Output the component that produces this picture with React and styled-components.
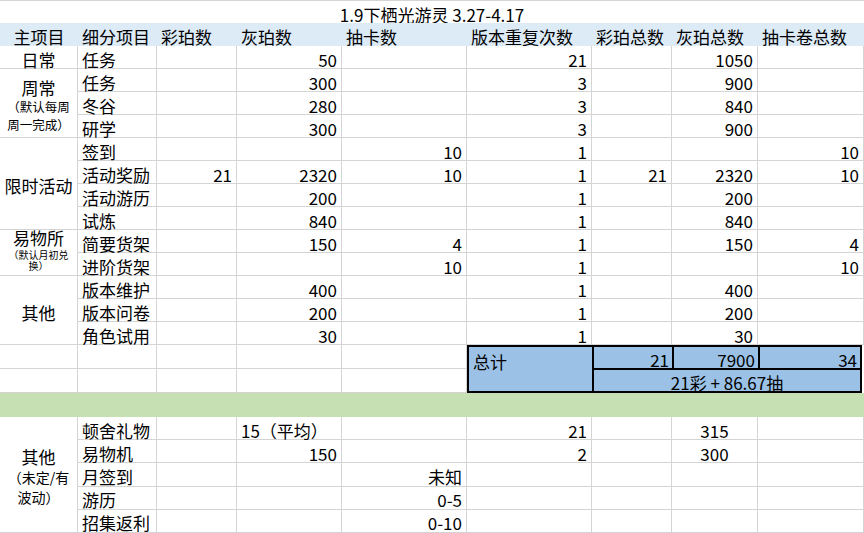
import React from 'react';
import styled, { createGlobalStyle } from 'styled-components';

const GlobalStyle = createGlobalStyle`
  * { box-sizing: border-box; }
  body {
    margin: 0;
    background: #fff;
    color: #000;
    font-family: "Noto Sans CJK SC", "Noto Sans", sans-serif;
  }
`;

const GRID = '#d4d4d4';

// sheet data: [细分项目, 彩珀数, 灰珀数, 抽卡数, 版本重复次数, 彩珀总数, 灰珀总数, 抽卡卷总数]
const sections = [
  { label: '日常', rows: [['任务', '', '50', '', '21', '', '1050', '']] },
  {
    label: '周常',
    note: ['（默认每周', '周一完成）'],
    noteSize: 12.5,
    noteLine: 18,
    rows: [
      ['任务', '', '300', '', '3', '', '900', ''],
      ['冬谷', '', '280', '', '3', '', '840', ''],
      ['研学', '', '300', '', '3', '', '900', ''],
    ],
  },
  {
    label: '限时活动',
    rows: [
      ['签到', '', '', '10', '1', '', '', '10'],
      ['活动奖励', '21', '2320', '10', '1', '21', '2320', '10'],
      ['活动游历', '', '200', '', '1', '', '200', ''],
      ['试炼', '', '840', '', '1', '', '840', ''],
    ],
  },
  {
    label: '易物所',
    note: ['（默认月初兑', '换）'],
    noteSize: 10,
    noteLine: 11,
    labelLine: 18,
    lift: true,
    rows: [
      ['简要货架', '', '150', '4', '1', '', '150', '4'],
      ['进阶货架', '', '', '10', '1', '', '', '10'],
    ],
  },
  {
    label: '其他',
    rows: [
      ['版本维护', '', '400', '', '1', '', '400', ''],
      ['版本问卷', '', '200', '', '1', '', '200', ''],
      ['角色试用', '', '30', '', '1', '', '30', ''],
    ],
  },
];

const headers = ['主项目', '细分项目', '彩珀数', '灰珀数', '抽卡数', '版本重复次数', '彩珀总数', '灰珀总数', '抽卡卷总数'];

const extraAlign = ['left', 'right', 'right', 'right', 'right', 'right', 'center', 'right'];
const extras = [
  ['顿舍礼物', '', { v: '15（平均）', a: 'left' }, '', '21', '', '315', ''],
  ['易物机', '', '150', '', '2', '', '300', ''],
  ['月签到', '', '', '未知', '', '', '', ''],
  ['游历', '', '', '0-5', '', '', '', ''],
  ['招集返利', '', '', '0-10', '', '', '', ''],
];

const justify = (a) => (a === 'right' ? 'flex-end' : a === 'center' ? 'center' : 'flex-start');

const Sheet = styled.div`
  display: grid;
  grid-template-columns: 78px 79px 80px 105px 125px 125px 80px 86px 106px;
  grid-template-rows: repeat(15, 23px) repeat(2, 24px) 24px repeat(5, 1fr);
  width: 864px;
  height: 533px;
  overflow: hidden;
`;

const Title = styled.div`
  grid-column: 1 / -1;
  display: flex;
  align-items: center;
  justify-content: center;
  padding-top: 4px;
  border-top: 1px solid ${GRID};
  font-size: 17px;
  line-height: 1;
`;

const HeadCell = styled.div`
  display: flex;
  align-items: center;
  justify-content: ${(p) => justify(p.$align)};
  padding: 4px 4px 0;
  background: #ddebf7;
  font-size: 17px;
  line-height: 1;
  white-space: nowrap;
`;

const Cell = styled.div`
  display: flex;
  align-items: center;
  justify-content: ${(p) => justify(p.$align)};
  min-width: 0;
  padding: 4px 4px 0;
  border-right: 1px solid ${GRID};
  border-bottom: 1px solid ${GRID};
  font-size: 17px;
  line-height: 1;
  white-space: nowrap;
`;

const MainCell = styled.div`
  grid-row: span ${(p) => p.$rows};
  display: flex;
  flex-direction: column;
  align-items: center;
  justify-content: center;
  padding: ${(p) => (p.$lift ? '0 0 6px' : '5px 0 0')};
  border-right: 1px solid ${GRID};
  border-bottom: 1px solid ${GRID};
  text-align: center;
`;

const MainLabel = styled.div`
  font-size: 17px;
  line-height: ${(p) => p.$line || 20}px;
  white-space: nowrap;
`;

const Note = styled.div`
  display: flex;
  flex-direction: column;
  align-items: center;
  margin-top: ${(p) => (p.$line < 14 ? 2 : 0)}px;
  font-size: ${(p) => p.$size}px;
  line-height: ${(p) => p.$line}px;
  white-space: nowrap;
`;

const Band = styled.div`
  grid-column: 1 / -1;
  background: #c6e0b4;
`;

const TotalBlock = styled.div`
  grid-column: 6 / span 4;
  grid-row: span 2;
  display: grid;
  grid-template-columns: 123px 78px 84px 1fr;
  grid-template-rows: 1fr 1fr;
  gap: 2px;
  margin-right: 2px;
  border: 2px solid #000;
  background: #000;
`;

const TotalCell = styled.div`
  display: flex;
  align-items: ${(p) => (p.$top ? 'flex-start' : 'center')};
  justify-content: ${(p) => justify(p.$align)};
  padding: ${(p) => (p.$top ? '6px 4px 0' : '4px 3px 0')};
  background: #9bc2e6;
  font-size: 17px;
  line-height: 1;
  white-space: nowrap;
  ${(p) => p.$rows && `grid-row: span ${p.$rows};`}
  ${(p) => p.$cols && `grid-column: span ${p.$cols};`}
`;

const MainGroup = ({ s }) => (
  <MainCell $rows={s.rows.length} $lift={s.lift}>
    <MainLabel $line={s.labelLine}>{s.label}</MainLabel>
    {s.note && (
      <Note $size={s.noteSize} $line={s.noteLine}>
        {s.note.map((line) => (
          <span key={line}>{line}</span>
        ))}
      </Note>
    )}
  </MainCell>
);

export default function App() {
  return (
    <>
      <GlobalStyle />
      <Sheet>
        <Title>1.9下栖光游灵 3.27-4.17</Title>

        {headers.map((h, i) => (
          <HeadCell key={h} $align={i === 0 ? 'center' : 'left'}>
            {h}
          </HeadCell>
        ))}

        {sections.map((s) => (
          <React.Fragment key={s.label}>
            <MainGroup s={s} />
            {s.rows.map((r, i) =>
              r.map((v, j) => (
                <Cell key={`${i}-${j}`} $align={j === 0 ? 'left' : 'right'}>
                  {v}
                </Cell>
              ))
            )}
          </React.Fragment>
        ))}

        {[0, 1, 2, 3, 4].map((i) => (
          <Cell key={`blank-a-${i}`} />
        ))}
        <TotalBlock>
          <TotalCell $rows={2} $top $align="left">总计</TotalCell>
          <TotalCell $align="right">21</TotalCell>
          <TotalCell $align="right">7900</TotalCell>
          <TotalCell $align="right">34</TotalCell>
          <TotalCell $cols={3} $align="center">21彩 + 86.67抽</TotalCell>
        </TotalBlock>
        {[0, 1, 2, 3, 4].map((i) => (
          <Cell key={`blank-b-${i}`} />
        ))}

        <Band />

        <MainGroup
          s={{ label: '其他', note: ['（未定/有', '波动）'], noteSize: 14, noteLine: 20, rows: extras }}
        />
        {extras.map((r, i) =>
          r.map((v, j) => {
            const item = typeof v === 'object' ? v : { v, a: extraAlign[j] };
            return (
              <Cell key={`x-${i}-${j}`} $align={item.a}>
                {item.v}
              </Cell>
            );
          })
        )}
      </Sheet>
    </>
  );
}
